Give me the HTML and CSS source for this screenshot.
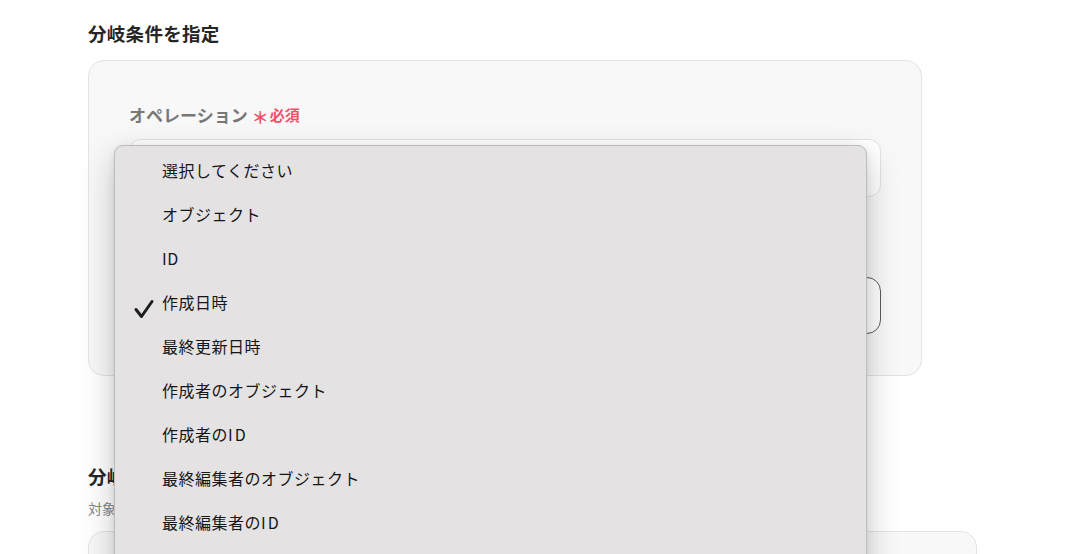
FILE: index.html
```html
<!DOCTYPE html>
<html lang="ja">
<head>
<meta charset="utf-8">
<title>分岐条件を指定</title>
<link rel="stylesheet" href="styles.css">
</head>
<body>
<main class="page">
  <h2 class="section-title">分岐条件を指定</h2>
  <section class="card card-top">
    <div class="field-label">オペレーション<span class="req"><span class="star">＊</span>必須</span></div>
    <div class="input input-light"></div>
    <div class="input input-focus"></div>
  </section>

  <h2 class="section-title second">分岐条件</h2>
  <p class="section-note">対象の値を指定</p>
  <section class="card card-bottom"></section>
</main>

<div class="menu" role="listbox">
  <div class="menu-item">選択してください</div>
  <div class="menu-item">オブジェクト</div>
  <div class="menu-item">ID</div>
  <div class="menu-item selected">
    <svg class="check" width="22" height="22" viewBox="0 0 22 22"><path d="M3 11.5 L8.5 18.5 L19 3.5" fill="none" stroke="#1e1e1e" stroke-width="3" stroke-linecap="round" stroke-linejoin="round"/></svg>
    作成日時
  </div>
  <div class="menu-item">最終更新日時</div>
  <div class="menu-item">作成者のオブジェクト</div>
  <div class="menu-item">作成者の<span class="latin">ID</span></div>
  <div class="menu-item">最終編集者のオブジェクト</div>
  <div class="menu-item">最終編集者の<span class="latin">ID</span></div>
</div>
</body>
</html>
```

FILE: styles.css
```css
html, body {
  margin: 0;
  padding: 0;
  height: 554px;
  overflow: hidden;
  background: #ffffff;
}

body {
  font-family: "Noto Sans CJK JP", "Noto Sans", sans-serif;
  color: #222;
  position: relative;
}

.page {
  padding: 20px 0 0 88px;
  display: flex;
  flex-direction: column;
  align-items: flex-start;
}

.section-title {
  margin: 0;
  font-size: 18.5px;
  line-height: 26px;
  font-weight: 700;
  color: #262626;
  letter-spacing: 0.3px;
}

.card {
  box-sizing: border-box;
  background: #f8f8f8;
  border: 1px solid #e3e3e3;
  border-radius: 16px;
}

.card-top {
  margin-top: 14px;
  width: 834px;
  height: 316px;
  padding: 39px 40px 0 40px;
  display: flex;
  flex-direction: column;
}

.field-label {
  font-size: 17px;
  line-height: 30px;
  font-weight: 700;
  color: #777;
  display: flex;
  align-items: center;
}

.req {
  margin-left: 4px;
  color: #f2506a;
  font-size: 15px;
  font-weight: 700;
  display: flex;
  align-items: center;
}

.star {
  font-size: 17px;
  line-height: 1;
  margin-right: 1px;
  position: relative;
  top: 1px;
}

.input {
  box-sizing: border-box;
  width: 752px;
  height: 58px;
  background: #ffffff;
  border-radius: 12px;
}

.input-light {
  margin-top: 9px;
  border: 1px solid #e2e2e2;
}

.input-focus {
  margin-top: 80px;
  height: 57px;
  border: 1px solid #5a5a5a;
  border-radius: 14px;
}

.section-title.second {
  margin-top: 87px;
}

.section-note {
  margin: 9px 0 0;
  font-size: 14px;
  line-height: 20px;
  color: #888;
}

.card-bottom {
  margin-top: 13px;
  width: 889px;
  height: 80px;
}

.menu {
  position: absolute;
  left: 114px;
  top: 145px;
  width: 753px;
  box-sizing: border-box;
  padding: 2px 0 40px;
  background: #e4e2e3;
  border: 1px solid #bdbcbd;
  border-radius: 9px;
  box-shadow: 0 12px 34px rgba(0, 0, 0, 0.22), 0 2px 8px rgba(0, 0, 0, 0.08);
}

.menu-item {
  position: relative;
  height: 44px;
  display: flex;
  align-items: center;
  padding-left: 47px;
  font-size: 16px;
  font-weight: 400;
  letter-spacing: 0.5px;
  color: #161616;
}

.latin {
  letter-spacing: 2px;
}

.check {
  position: absolute;
  left: 18px;
  top: 18px;
}
```
